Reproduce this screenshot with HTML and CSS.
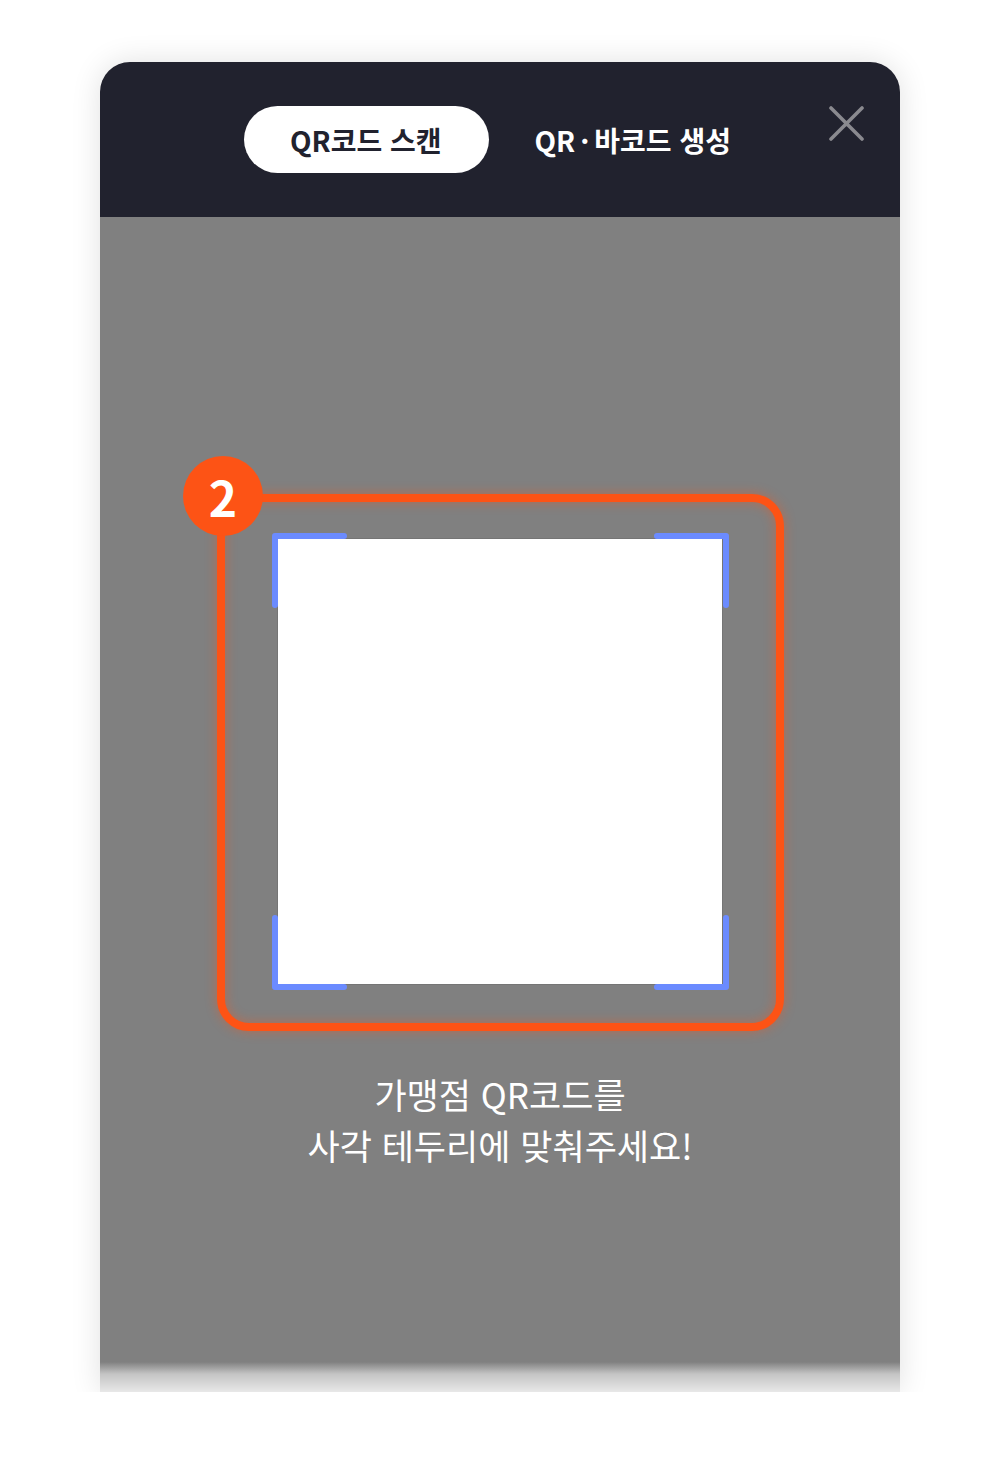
FILE: index.html
```html
<!DOCTYPE html>
<html lang="ko">

<head>
    <meta charset="UTF-8" />
    <title>QR코드 스캔</title>
    <link rel="stylesheet" href="styles.css">
</head>

<body>
    <div class="sheet">
        <div class="sheet-head">
            <div class="tabs">
                <button class="tab active">QR코드 스캔</button>
                <button class="tab">QR<span class="dot">·</span>바코드 생성</button>
            </div>
            <button class="close-btn" aria-label="닫기">
                <svg width="35" height="35" viewBox="0 0 35 35">
                    <path d="M2 2 L33 33 M33 2 L2 33" stroke="#8a8a8f" stroke-width="3.6" stroke-linecap="round" fill="none" />
                </svg>
            </button>
        </div>

        <div class="sheet-body">
            <div class="frame">
                <span class="step-badge">2</span>
                <div class="scan-box">
                    <div class="scan-area"></div>
                    <svg class="scan-corners" width="457" height="457" viewBox="0 0 457 457">
                        <g stroke="#6b8bff" stroke-width="6" stroke-linecap="round" stroke-linejoin="round" fill="none">
                            <path d="M3 72 V3 H72" />
                            <path d="M385 3 H454 V72" />
                            <path d="M3 385 V454 H72" />
                            <path d="M385 454 H454 V385" />
                        </g>
                    </svg>
                </div>
            </div>

            <p class="guide">가맹점 QR코드를<br>사각 테두리에 맞춰주세요!</p>

            <div class="fade"></div>
        </div>
    </div>
</body>

</html>
```

FILE: styles.css
```css
body {
    margin: 0;
    background: #fff;
    font-family: "Noto Sans CJK KR", "Noto Sans", sans-serif;
}

.sheet {
    width: 800px;
    height: 1330px;
    margin: 62px auto 0;
    border-radius: 30px 30px 0 0;
    overflow: hidden;
    display: flex;
    flex-direction: column;
    box-shadow: 0 0 30px rgba(0, 0, 0, 0.12);
}

.sheet-head {
    height: 155px;
    flex-shrink: 0;
    box-sizing: border-box;
    padding: 44px 36px 0 144px;
    background: #21222e;
    display: flex;
    align-items: flex-start;
}

.tabs {
    display: flex;
}

.tab {
    height: 67px;
    padding: 0 47px 0 46px;
    border: none;
    border-radius: 34px;
    background: transparent;
    color: #fff;
    font-family: inherit;
    font-size: 28px;
    font-weight: 700;
    cursor: pointer;
}

.tab .dot {
    margin: 0 5px;
}

.tab.active {
    background: #fff;
    color: #21222e;
}

.close-btn {
    margin-left: auto;
    padding: 0;
    width: 35px;
    height: 35px;
    border: none;
    background: none;
    cursor: pointer;
}

.close-btn svg {
    display: block;
}

.sheet-body {
    flex: 1;
    background: #808080;
    display: flex;
    flex-direction: column;
    align-items: center;
    position: relative;
}

.frame {
    position: relative;
    margin-top: 277px;
    margin-left: 1px;
    padding: 31px 47px 33px 47px;
    border: 8px solid #fd5315;
    border-radius: 32px;
    box-shadow: 0 0 12px rgba(255, 83, 20, 0.45), inset 0 0 12px rgba(255, 83, 20, 0.45);
}

.step-badge {
    position: absolute;
    left: -42px;
    top: -46px;
    width: 80px;
    height: 80px;
    border-radius: 50%;
    background: #fd5315;
    color: #fff;
    font-size: 48px;
    font-weight: 700;
    line-height: 80px;
    text-align: center;
}

.scan-box {
    position: relative;
    width: 457px;
    height: 457px;
    box-sizing: border-box;
    padding: 6px 7px 6px 6px;
}

.scan-area {
    width: 100%;
    height: 100%;
    background: #fff;
    box-shadow: 0 0 1px rgba(0, 0, 0, 0.5);
}

.scan-corners {
    position: absolute;
    left: 0;
    top: 0;
}

.guide {
    margin: 37px 0 0;
    color: #fff;
    font-size: 35px;
    font-weight: 400;
    line-height: 51px;
    text-align: center;
}

.fade {
    position: absolute;
    left: 0;
    right: 0;
    bottom: 0;
    height: 30px;
    background: linear-gradient(to bottom, #808080 0%, #c4c4c4 40%, #e8e8e8 100%);
}
```
